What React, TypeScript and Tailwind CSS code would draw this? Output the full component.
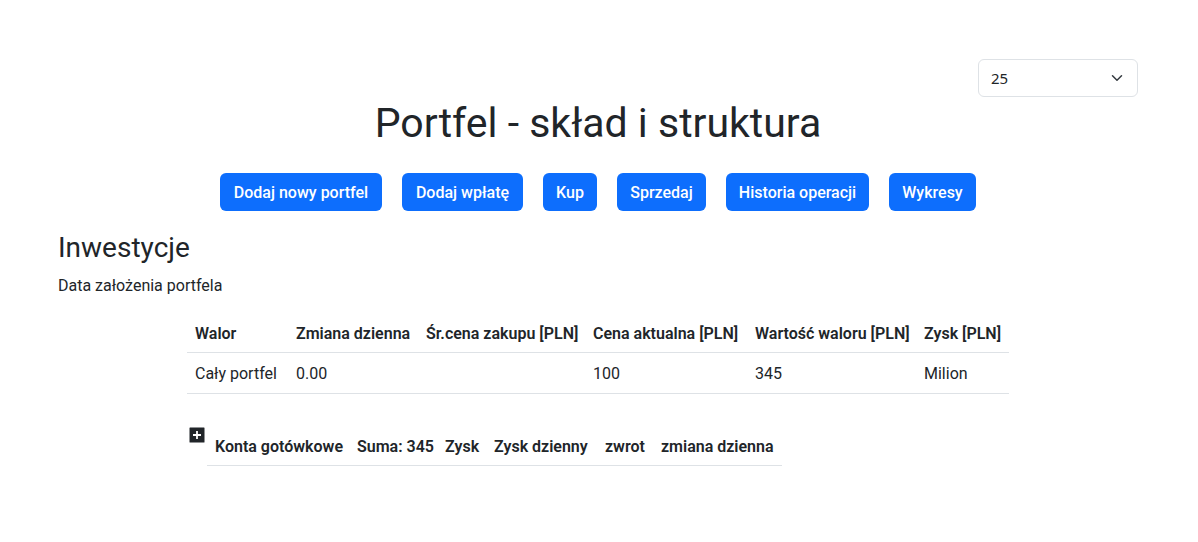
import { useState } from "react";

const actions = [
  { label: "Dodaj nowy portfel", width: "w-[162px]" },
  { label: "Dodaj wpłatę", width: "w-[121px]" },
  { label: "Kup", width: "w-[54px]" },
  { label: "Sprzedaj", width: "w-[89px]" },
  { label: "Historia operacji", width: "w-[143px]" },
  { label: "Wykresy", width: "w-[87px]" },
];

const holdings = [
  { label: "Walor", width: "w-[101px]", value: "Cały portfel" },
  { label: "Zmiana dzienna", width: "w-[130px]", value: "0.00" },
  { label: "Śr.cena zakupu [PLN]", width: "w-[167px]", value: "" },
  { label: "Cena aktualna [PLN]", width: "w-[162px]", value: "100" },
  { label: "Wartość waloru [PLN]", width: "w-[169px]", value: "345" },
  { label: "Zysk [PLN]", width: "w-[93px]", value: "Milion" },
];

const cash = [
  { label: "Konta gotówkowe", width: "w-[142px]" },
  { label: "Suma: 345", width: "w-[88px]" },
  { label: "Zysk", width: "w-[49px]" },
  { label: "Zysk dzienny", width: "w-[111px]" },
  { label: "zwrot", width: "w-[56px]" },
  { label: "zmiana dzienna", width: "w-[129px]" },
];

function PageSizeSelect() {
  const [size, setSize] = useState("25");
  return (
    <div className="grid w-40 items-center">
      <select
        aria-label="Liczba pozycji"
        value={size}
        onChange={(e) => setSize(e.target.value)}
        className="col-start-1 row-start-1 h-[38px] w-full appearance-none rounded-md border border-[#dee2e6] bg-white px-3 font-['Noto_Sans',sans-serif] text-[15px]"
      >
        <option>25</option>
        <option>50</option>
        <option>100</option>
      </select>
      <svg
        viewBox="0 0 16 16"
        className="pointer-events-none col-start-1 row-start-1 mr-[15px] size-3 justify-self-end"
        fill="none"
        stroke="#343a40"
        strokeWidth="2"
        strokeLinecap="round"
        strokeLinejoin="round"
        aria-hidden="true"
      >
        <path d="m2 5 6 6 6-6" />
      </svg>
    </div>
  );
}

export default function App() {
  return (
    <main className="min-h-screen bg-white pt-[59px] pr-[60px] pb-12 pl-[58px] font-[Roboto,sans-serif] text-base text-[#212529]">
      <div className="flex justify-end">
        <PageSizeSelect />
      </div>

      <h1 className="pt-px text-center text-[41px] leading-[50px] font-normal">Portfel - skład i struktura</h1>

      <nav className="mt-[25px] flex flex-wrap justify-center gap-5">
        {actions.map((a) => (
          <button
            key={a.label}
            type="button"
            className={`h-[38px] rounded-md bg-[#0d6efd] pt-0.5 text-center font-medium whitespace-nowrap text-white ${a.width}`}
          >
            {a.label}
          </button>
        ))}
      </nav>

      <h2 className="mt-5 text-[28px] leading-[34px] font-normal">Inwestycje</h2>
      <p className="mt-[9px]">Data założenia portfela</p>

      <table className="mx-auto mt-[14px] w-[822px] table-fixed border-collapse text-left">
        <thead>
          <tr className="border-b border-[#dee2e6]">
            {holdings.map((h) => (
              <th key={h.label} scope="col" className={`px-2 pt-[10px] pb-[6px] font-semibold whitespace-nowrap ${h.width}`}>
                {h.label}
              </th>
            ))}
          </tr>
        </thead>
        <tbody>
          <tr className="border-b border-[#dee2e6]">
            {holdings.map((h) => (
              <td key={h.label} className="px-2 pt-[9px] pb-[7px]">
                {h.value}
              </td>
            ))}
          </tr>
        </tbody>
      </table>

      <div className="mx-auto mt-[33px] flex w-full max-w-[822px] items-start">
        <button type="button" aria-label="Rozwiń konta gotówkowe" className="mx-0.5 size-4 shrink-0">
          <svg viewBox="0 0 16 16" className="size-4" aria-hidden="true">
            <rect x="0.5" y="0.5" width="15" height="15" rx="0.5" fill="#212529" />
            <path d="M8 4v8M4 8h8" stroke="#fff" strokeWidth="1.8" />
          </svg>
        </button>
        <table className="w-[575px] table-fixed border-collapse text-left">
          <thead>
            <tr className="border-b border-[#dee2e6]">
              {cash.map((c) => (
                <th key={c.label} scope="col" className={`px-2 pt-2 pb-[6px] font-semibold whitespace-nowrap ${c.width}`}>
                  {c.label}
                </th>
              ))}
            </tr>
          </thead>
        </table>
      </div>
    </main>
  );
}
